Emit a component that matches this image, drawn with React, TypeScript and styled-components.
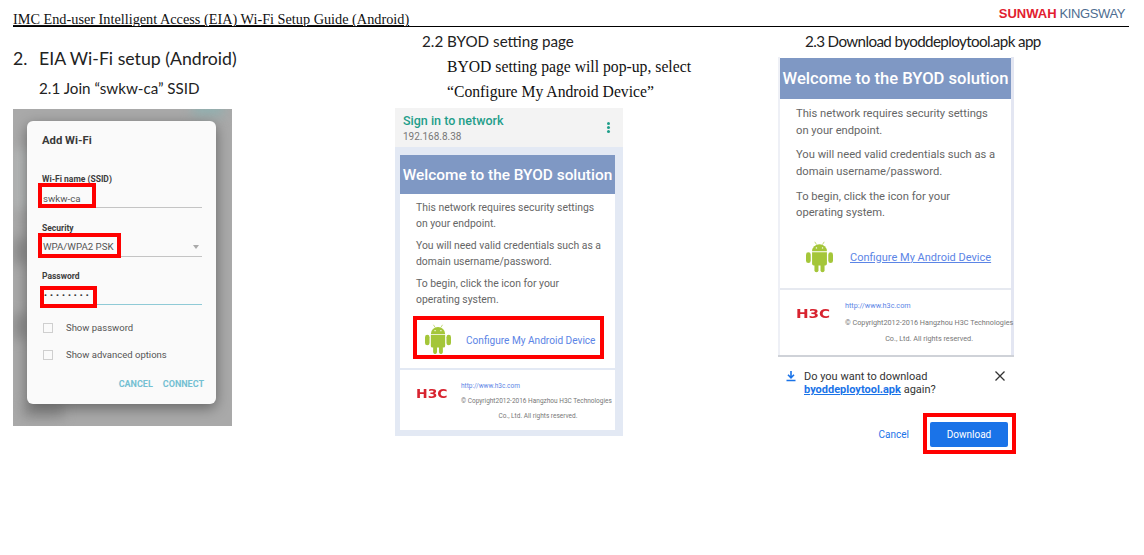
import React from 'react';
import styled, {createGlobalStyle} from 'styled-components';

const GlobalStyle = createGlobalStyle`
  html, body {
    margin: 0;
    padding: 0;
    background: #fff;
    overflow: hidden;
  }
`;

const Page = styled.div`
  width: 1144px;
  height: 555px;
  padding: 0 15px 0 13px;
  box-sizing: border-box;
  color: #111;
`;

const Header = styled.header`
  height: 26px;
  box-sizing: content-box;
  display: flex;
  justify-content: space-between;
  align-items: flex-end;
  border-bottom: 1px solid #000;
`;

const DocTitle = styled.span`
  font: 14.27px/16px 'Liberation Serif', serif;
  text-decoration: underline;
  margin-bottom: -1px;
`;

const Logo = styled.div`
  font: 13px/14px 'Liberation Sans', sans-serif;
  margin: 0 4px 5px 0;
  display: flex;
  gap: 3px;
`;

const LogoRed = styled.span`
  color: #e2202f;
  font-weight: 700;
`;

const LogoBlue = styled.span`
  color: #4d6d90;
  letter-spacing: -0.4px;
`;

const Columns = styled.div`
  display: flex;
`;

const Column = styled.section<{$width: number; $top: number}>`
  width: ${p => p.$width}px;
  padding-top: ${p => p.$top}px;
  flex: none;
`;

const SectionTitle = styled.h2`
  margin: 0;
  display: flex;
  font: 400 17.7px/24px Lato, sans-serif;
  color: #222;
`;

const SectionNumber = styled.span`
  width: 26px;
`;

const SubTitle = styled.h3<{$indent: number; $tight?: boolean}>`
  margin: 0 0 0 ${p => p.$indent}px;
  font: 400 15.2px/20px Lato, sans-serif;
  letter-spacing: ${p => (p.$tight ? '-0.62px' : '0')};
  color: #222;
  white-space: nowrap;
`;

const Instruction = styled.p`
  margin: 3px 0 4px 52px;
  font: 400 15.7px/25px 'Liberation Serif', serif;
  color: #111;
`;

const Backdrop = styled.div`
  position: relative;
  width: 219px;
  height: 317px;
  margin-top: 11px;
  background: #a9a9a9;
  overflow: hidden;
  padding: 12px 14px;
  box-sizing: border-box;
`;

const BlurSpot = styled.i<{$x: number; $y: number; $w: number; $h: number; $c: string}>`
  position: absolute;
  left: ${p => p.$x}px;
  top: ${p => p.$y}px;
  width: ${p => p.$w}px;
  height: ${p => p.$h}px;
  background: ${p => p.$c};
  filter: blur(6px);
`;

const Dialog = styled.div`
  position: relative;
  width: 189px;
  height: 283px;
  box-sizing: border-box;
  padding: 13px 14px 0 15px;
  background: #fafafa;
  border-radius: 6px;
  box-shadow: 0 4px 14px rgba(0, 0, 0, 0.4);
  font-family: Roboto, sans-serif;
`;

const DialogTitle = styled.div`
  font-size: 11.3px;
  line-height: 13px;
  font-weight: 700;
  color: #3a3a3a;
  margin-bottom: 27px;
`;

const Field = styled.div<{$last?: boolean}>`
  position: relative;
  height: ${p => (p.$last ? 43 : 48.5)}px;
`;

const FieldLabel = styled.div`
  font-size: 8.5px;
  line-height: 11px;
  font-weight: 700;
  color: #3d3d3d;
`;

const FieldValue = styled.div<{$focused?: boolean}>`
  box-sizing: border-box;
  display: flex;
  justify-content: space-between;
  align-items: center;
  height: 23px;
  padding: 4px 0 0 1px;
  font-size: 9.7px;
  color: #555;
  border-bottom: 1px solid ${p => (p.$focused ? '#8fcad6' : '#c4c4c4')};
`;

const Caret = styled.span`
  width: 0;
  height: 0;
  margin-right: 3px;
  border: 3px solid transparent;
  border-top: 4px solid #aaa;
  border-bottom: 0;
`;

const Dots = styled.span`
  font-size: 8px;
  font-weight: 700;
  letter-spacing: 3.1px;
  color: #333;
  margin-left: 1px;
`;

const RedBox = styled.div<{$l: number; $t: number; $w: number; $h: number}>`
  position: absolute;
  left: ${p => p.$l}px;
  top: ${p => p.$t}px;
  width: ${p => p.$w}px;
  height: ${p => p.$h}px;
  box-sizing: border-box;
  border: 4px solid #f00;
`;

const CheckRow = styled.div`
  display: flex;
  align-items: center;
  gap: 13px;
  height: 27px;
  padding-left: 1px;
  font-size: 9.5px;
  color: #555;
`;

const CheckBox = styled.span`
  width: 10px;
  height: 10px;
  box-sizing: border-box;
  border: 1px solid #cfcfcf;
  flex: none;
`;

const DialogActions = styled.div`
  display: flex;
  justify-content: flex-end;
  gap: 10px;
  margin: 11px -2px 0 0;
  font-size: 9px;
  line-height: 11px;
  font-weight: 700;
  color: #74c0d2;
`;

const PhoneShot = styled.div`
  width: 228px;
  height: 328px;
  box-sizing: border-box;
  background: #e3e9f4;
`;

const BrowserBar = styled.div`
  height: 39px;
  background: #f3f3f3;
  padding: 6px 8px 0;
  box-sizing: border-box;
  position: relative;
  font-family: Roboto, sans-serif;
  margin-bottom: 8px;
`;

const BrowserTitle = styled.div`
  font-size: 12.5px;
  line-height: 14px;
  font-weight: 500;
  color: #1f9e8a;
`;

const BrowserUrl = styled.div`
  margin-top: 2px;
  font-size: 10px;
  line-height: 14px;
  color: #777;
`;

const MenuDots = styled.span`
  position: absolute;
  right: 13px;
  top: 14px;
  width: 3px;
  height: 3px;
  border-radius: 50%;
  background: #1f9e8a;
  box-shadow: 0 4px 0 #1f9e8a, 0 8px 0 #1f9e8a;
`;

const Card = styled.div<{$large?: boolean}>`
  font-family: Roboto, sans-serif;
  background: #fff;
  box-sizing: border-box;
  width: ${p => (p.$large ? 231 : 215)}px;
  margin-left: ${p => (p.$large ? 2 : 5)}px;
  font-size: ${p => (p.$large ? 11.2 : 10.4)}px;
  color: #666;
`;

const CardHeader = styled.div<{$large?: boolean}>`
  height: ${p => (p.$large ? 41 : 39)}px;
  display: flex;
  align-items: center;
  justify-content: center;
  background: #7f98c4;
  color: #fff;
  font-size: ${p => (p.$large ? 16.6 : 15.4)}px;
  font-weight: 500;
  white-space: nowrap;
`;

const CardBody = styled.div<{$large?: boolean}>`
  padding: ${p => (p.$large ? '7px 0 0 16px' : '6px 0 0 16px')};
  line-height: ${p => (p.$large ? 16.5 : 15.5)}px;
`;

const Para = styled.p<{$large?: boolean}>`
  margin: 0 0 ${p => (p.$large ? 8.3 : 7)}px;
`;

const DeviceRow = styled.div<{$large?: boolean}>`
  position: relative;
  height: 43px;
  display: flex;
  align-items: center;
  margin: ${p => (p.$large ? '14px 0 0 26px' : '9px 0 0 25px')};
  gap: ${p => (p.$large ? 17 : 15)}px;
`;

const AndroidSvg = styled.svg<{$large?: boolean}>`
  flex: none;
  margin-top: ${p => (p.$large ? 0 : 3)}px;
`;

const DeviceLink = styled.span<{$large?: boolean}>`
  color: #5c85e6;
  white-space: nowrap;
  font-size: ${p => (p.$large ? 11 : 10.1)}px;
  margin-top: ${p => (p.$large ? 0 : 5)}px;
  text-decoration: ${p => (p.$large ? 'underline' : 'none')};
`;

const CardFooter = styled.div<{$large?: boolean}>`
  border-top: 2px solid ${p => (p.$large ? '#e6e9f0' : '#e3e9f4')};
  margin-top: ${p => (p.$large ? 9.5 : 9)}px;
  display: flex;
  height: ${p => (p.$large ? 68 : 62)}px;
  padding: ${p => (p.$large ? '8px 0 0 16px' : '9px 0 0 16px')};
  box-sizing: border-box;
  font-size: ${p => (p.$large ? 7.25 : 6.5)}px;
  color: #777;
`;

const H3CLogo = styled.span<{$large?: boolean}>`
  width: ${p => (p.$large ? 49 : 45)}px;
  flex: none;
  margin-top: ${p => (p.$large ? 9 : 8)}px;
  font: 700 ${p => (p.$large ? 13 : 12)}px/14px 'DejaVu Sans', sans-serif;
  color: #d8232f;
  transform: scaleX(1.16);
  transform-origin: left center;
`;

const FooterText = styled.div<{$large?: boolean}>`
  flex: 1;
  white-space: nowrap;
  line-height: ${p => (p.$large ? 16.5 : 15)}px;
`;

const FooterLink = styled.div`
  color: #5c85e6;
`;

const FooterCentered = styled.div`
  text-align: center;
`;

const DownloadShot = styled.div`
  position: relative;
  width: 236px;
  margin-top: 6px;
`;

const CardFrame = styled.div`
  width: 236px;
  height: 300px;
  box-sizing: border-box;
  padding-top: 1px;
  background: linear-gradient(to right, #eef0f6 2px, #fff 2px, #fff 233px, #e3e6f2 233px);
  border-bottom: 2px solid #cfd2d8;
  overflow: hidden;
`;

const Prompt = styled.div`
  display: flex;
  padding: 13px 8px 0 7px;
  font-family: Roboto, sans-serif;
  font-size: 11px;
  line-height: 13px;
  color: #333;
`;

const PromptIcon = styled.svg`
  width: 12px;
  height: 12px;
  margin-right: 7px;
  flex: none;
`;

const PromptText = styled.div`
  flex: 1;
`;

const ApkName = styled.span`
  color: #1a73e8;
  font-weight: 700;
  text-decoration: underline;
`;

const CloseIcon = styled.svg`
  width: 12px;
  height: 12px;
  flex: none;
`;

const PromptActions = styled.div`
  position: relative;
  display: flex;
  justify-content: flex-end;
  align-items: center;
  gap: 21px;
  margin-top: 26px;
  padding-right: 6px;
  font-family: Roboto, sans-serif;
  font-size: 10px;
`;

const CancelLink = styled.span`
  color: #1a73e8;
`;

const DownloadButton = styled.div`
  width: 78px;
  height: 25px;
  display: flex;
  align-items: center;
  justify-content: center;
  background: #1a73e8;
  color: #fff;
  border-radius: 2px;
`;

const AndroidIcon = ({width, large}: {width: number; large?: boolean}) => (
  <AndroidSvg $large={large} width={width} height={width * 1.16} viewBox="0 0 40 46">
    <g fill="#a4c639">
      <path d="M9 15a11 10.5 0 0 1 22 0z" />
      <path d="M9 16.5h22v17a2.5 2.5 0 0 1-2.5 2.5h-17A2.5 2.5 0 0 1 9 33.5z" />
      <rect x="0" y="16.5" width="7" height="16" rx="3.5" />
      <rect x="33" y="16.5" width="7" height="16" rx="3.5" />
      <rect x="12.5" y="33" width="6" height="13" rx="3" />
      <rect x="21.5" y="33" width="6" height="13" rx="3" />
    </g>
    <path d="M13 1l2.5 4M27 1l-2.5 4" stroke="#a4c639" strokeWidth="1" fill="none" />
    <circle cx="15.5" cy="10" r="1.1" fill="#fff" />
    <circle cx="24.5" cy="10" r="1.1" fill="#fff" />
  </AndroidSvg>
);

function WelcomeCard({large}: {large?: boolean}) {
  return (
    <Card $large={large}>
      <CardHeader $large={large}>Welcome to the BYOD solution</CardHeader>
      <CardBody $large={large}>
        <Para $large={large}>This network requires security settings<br />on your endpoint.</Para>
        <Para $large={large}>You will need valid credentials such as a<br />domain username/password.</Para>
        <Para $large={large}>To begin, click the icon for your<br />operating system.</Para>
      </CardBody>
      <DeviceRow $large={large}>
        <AndroidIcon width={large ? 27 : 26} large={large} />
        <DeviceLink $large={large}>Configure My Android Device</DeviceLink>
        {!large && <RedBox $l={-12} $t={0} $w={191} $h={43} />}
      </DeviceRow>
      <CardFooter $large={large}>
        <H3CLogo $large={large}>H3C</H3CLogo>
        <FooterText $large={large}>
          <FooterLink>http://www.h3c.com</FooterLink>
          <div>© Copyright2012-2016 Hangzhou H3C Technologies</div>
          <FooterCentered>Co., Ltd. All rights reserved.</FooterCentered>
        </FooterText>
      </CardFooter>
    </Card>
  );
}

export default function App() {
  return (
    <Page>
      <GlobalStyle />
      <Header>
        <DocTitle>IMC End-user Intelligent Access (EIA) Wi-Fi Setup Guide (Android)</DocTitle>
        <Logo>
          <LogoRed>SUNWAH</LogoRed>
          <LogoBlue>KINGSWAY</LogoBlue>
        </Logo>
      </Header>
      <Columns>
        <Column $width={382} $top={20}>
          <SectionTitle>
            <SectionNumber>2.</SectionNumber>EIA Wi-Fi setup (Android)
          </SectionTitle>
          <SubTitle $indent={26} style={{marginTop: 7}}>2.1 Join “swkw-ca” SSID</SubTitle>
          <Backdrop>
            <BlurSpot $x={180} $y={-8} $w={30} $h={14} $c="#8fb0b0" />
            <BlurSpot $x={2} $y={40} $w={14} $h={60} $c="#b9bcbc" />
            <BlurSpot $x={0} $y={130} $w={14} $h={25} $c="#8c8c8c" />
            <BlurSpot $x={0} $y={205} $w={14} $h={25} $c="#8c8c8c" />
            <BlurSpot $x={10} $y={295} $w={40} $h={14} $c="#8e8e8e" />
            <Dialog>
              <DialogTitle>Add Wi-Fi</DialogTitle>
              <Field>
                <FieldLabel>Wi-Fi name (SSID)</FieldLabel>
                <FieldValue>swkw-ca</FieldValue>
                <RedBox $l={-4} $t={9} $w={58} $h={25} />
              </Field>
              <Field>
                <FieldLabel>Security</FieldLabel>
                <FieldValue>WPA/WPA2 PSK<Caret /></FieldValue>
                <RedBox $l={-4} $t={10.5} $w={83} $h={25} />
              </Field>
              <Field $last>
                <FieldLabel>Password</FieldLabel>
                <FieldValue $focused><Dots>••••••••</Dots></FieldValue>
                <RedBox $l={-2} $t={15} $w={57} $h={22} />
              </Field>
              <CheckRow><CheckBox />Show password</CheckRow>
              <CheckRow><CheckBox />Show advanced options</CheckRow>
              <DialogActions>
                <span>CANCEL</span>
                <span>CONNECT</span>
              </DialogActions>
            </Dialog>
          </Backdrop>
        </Column>
        <Column $width={383} $top={4}>
          <SubTitle $indent={27}>2.2 BYOD setting page</SubTitle>
          <Instruction>
            BYOD setting page will pop-up, select<br />“Configure My Android Device”
          </Instruction>
          <PhoneShot>
            <BrowserBar>
              <BrowserTitle>Sign in to network</BrowserTitle>
              <BrowserUrl>192.168.8.38</BrowserUrl>
              <MenuDots />
            </BrowserBar>
            <WelcomeCard />
          </PhoneShot>
        </Column>
        <Column $width={351} $top={4}>
          <SubTitle $indent={27} $tight>2.3 Download byoddeploytool.apk app</SubTitle>
          <DownloadShot>
            <CardFrame>
              <WelcomeCard large />
            </CardFrame>
            <Prompt>
              <PromptIcon viewBox="0 0 12 12">
                <path d="M6 1v6M3 4.8 6 7.8l3-3M1.5 10.5h9" stroke="#1a73e8" strokeWidth="1.6" fill="none" />
              </PromptIcon>
              <PromptText>
                Do you want to download<br />
                <ApkName>byoddeploytool.apk</ApkName> again?
              </PromptText>
              <CloseIcon viewBox="0 0 12 12">
                <path d="M1.5 1.5l9 9M10.5 1.5l-9 9" stroke="#333" strokeWidth="1.3" fill="none" />
              </CloseIcon>
            </Prompt>
            <PromptActions>
              <CancelLink>Cancel</CancelLink>
              <DownloadButton>Download</DownloadButton>
              <RedBox $l={145} $t={-9} $w={93} $h={41} />
            </PromptActions>
          </DownloadShot>
        </Column>
      </Columns>
    </Page>
  );
}
